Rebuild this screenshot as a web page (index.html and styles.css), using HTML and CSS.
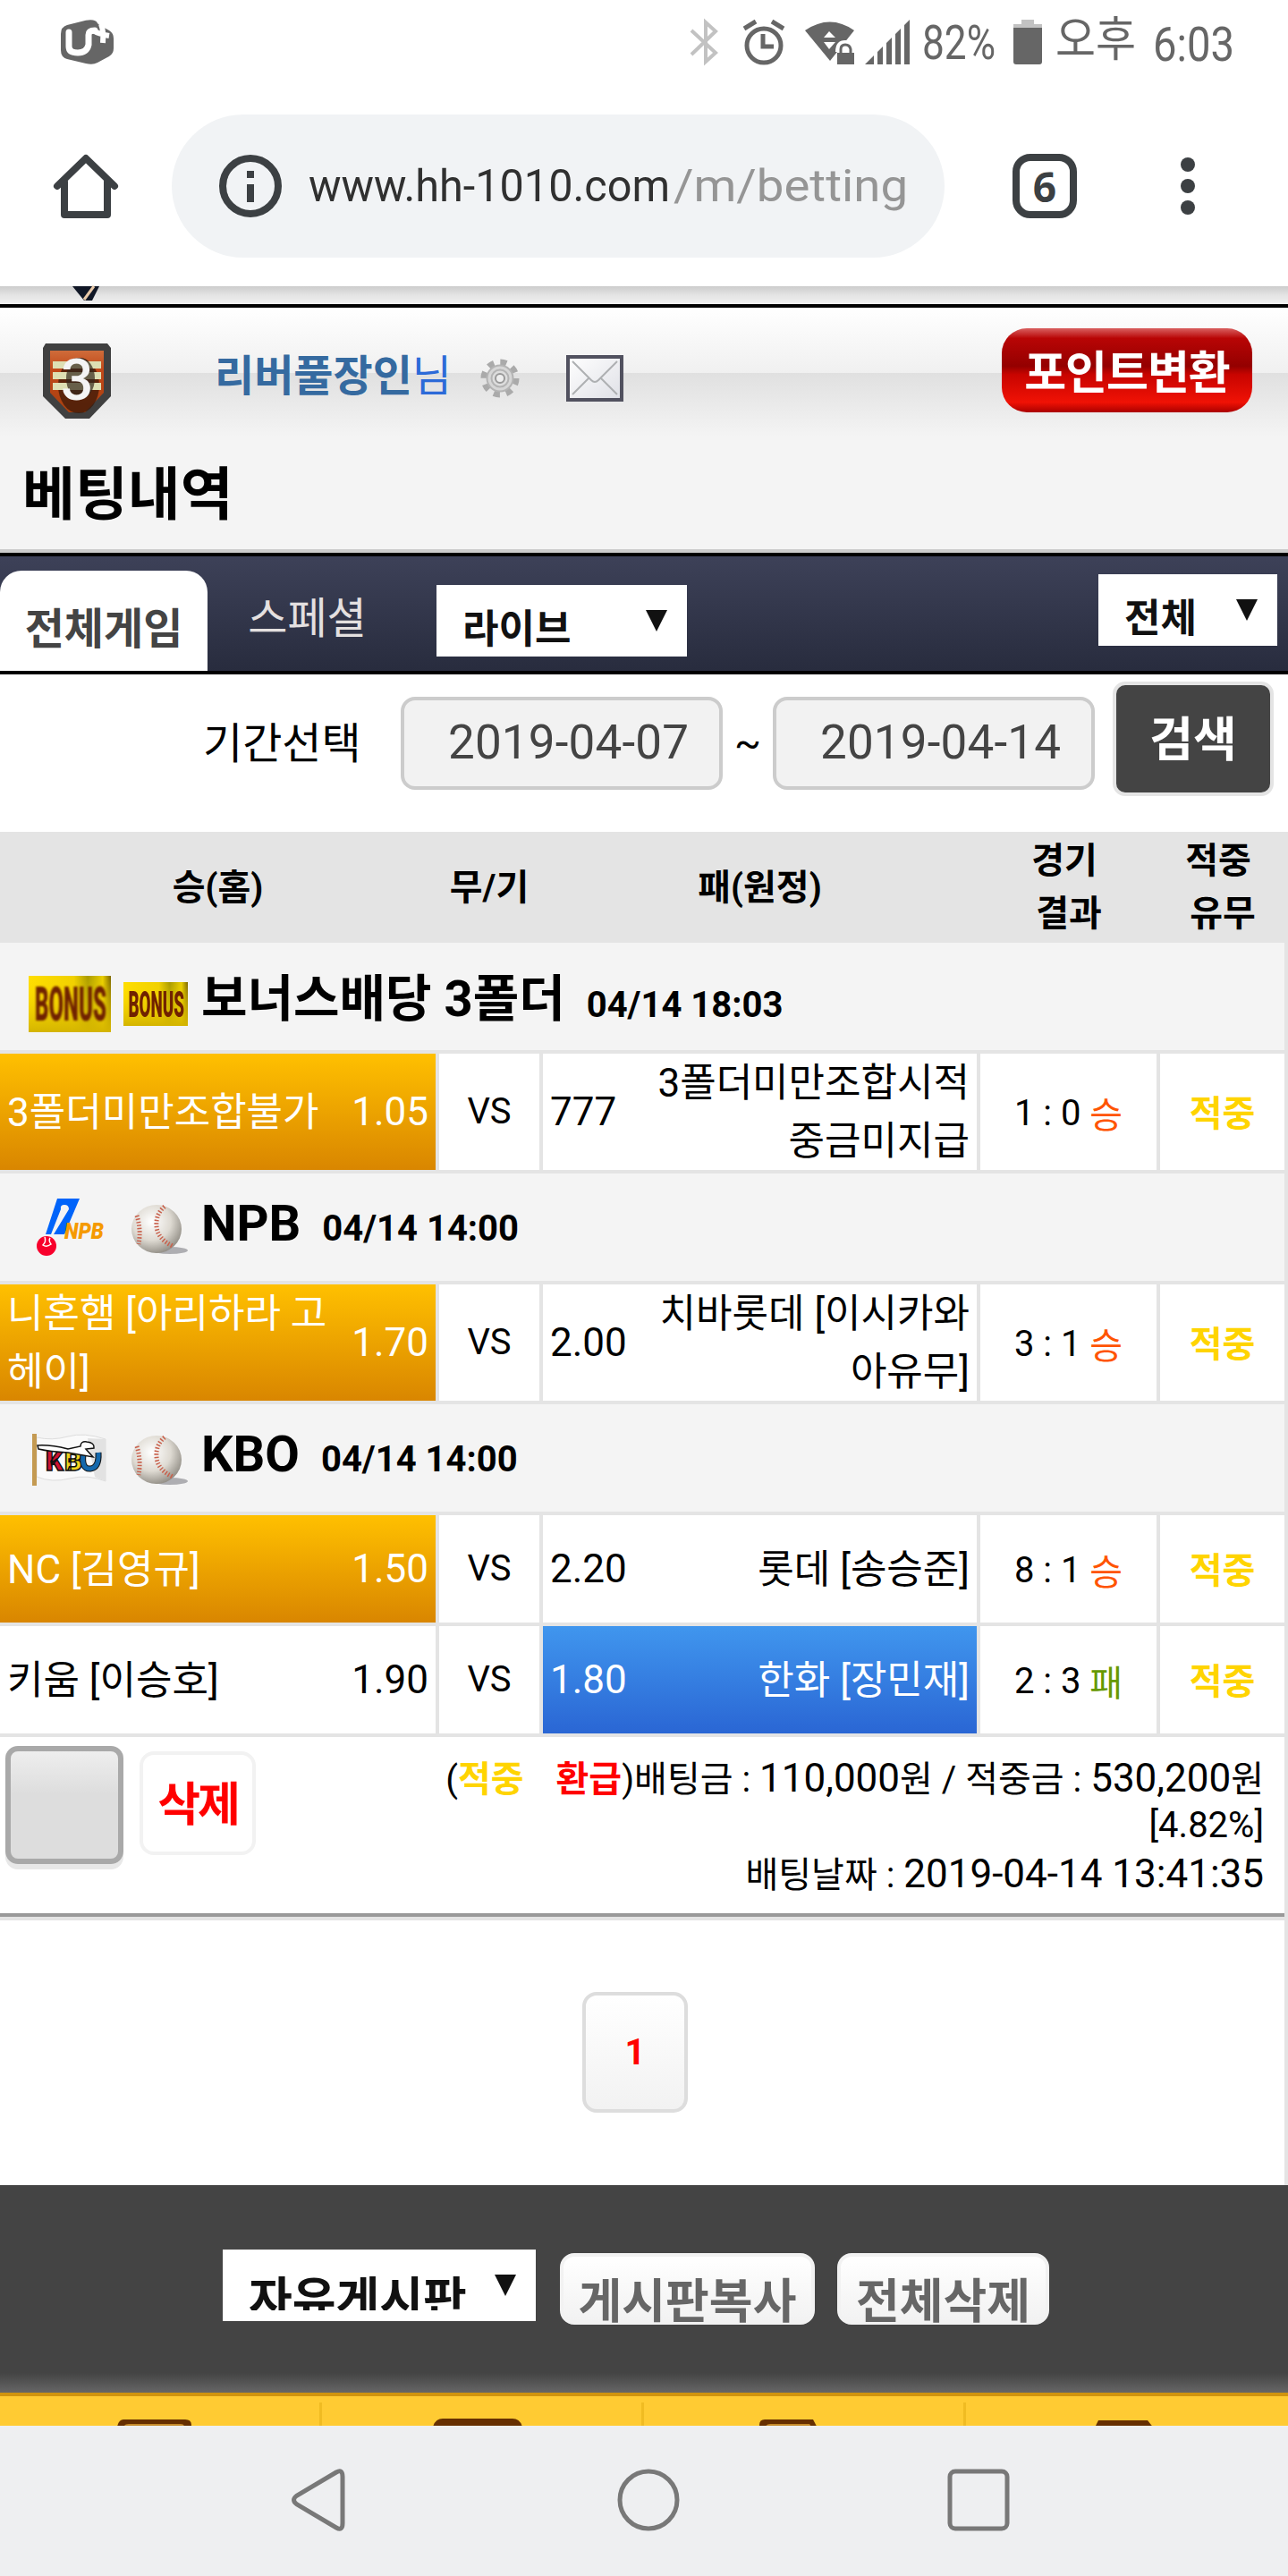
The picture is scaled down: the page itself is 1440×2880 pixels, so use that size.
FILE: index.html
```html
<!DOCTYPE html>
<html lang="ko">
  <head>
    <meta charset="utf-8">
    <title>베팅내역</title>
    <link rel="stylesheet" href="styles.css">
  </head>
  <body>
    <div class="statusbar">
      <svg class="carrier" width="60" height="50" viewBox="0 0 60 50">
        <path fill="#666" d="M8 6L29 .8Q40-1 42 4L44 6 55 12Q60 15 60 21V32Q60 38 55 41L42 48Q37 51 29 49L8 44Q1 42 1 34V16Q1 8 8 6Z"/>
        <path fill="none" stroke="#fff" stroke-width="7" stroke-linecap="round" d="M10 14V30Q10 37 20 37T32 28V17Q32 12 39 12"/>
        <path fill="none" stroke="#fff" stroke-width="6" d="M37 12Q43 16 55 18M46 5Q49 12 48 26"/>
      </svg>
      <svg class="bluetooth" width="31" height="50" viewBox="0 0 31 50"><path fill="none" stroke="#c2c2c2" stroke-width="4" d="M1 12L28 37 17 47V3L28 13 1 39"/></svg>
      <svg class="alarm" width="46" height="50" viewBox="0 0 46 50">
        <ellipse cx="23" cy="29" rx="19" ry="19" fill="none" stroke="#666" stroke-width="5"/>
        <path fill="none" stroke="#666" stroke-width="5" d="M22 16V30H34M1 10L14 2M45 10L32 2"/>
      </svg>
      <svg class="wifi" width="56" height="50" viewBox="0 0 56 50">
        <path fill="#666" d="M0 12Q28-7 55 12L28 46Z"/>
        <path fill="#fff" d="M21 20L27 13 34 20ZM21 25H34L27 33ZM34 36Q34 23 45 23T56 32V36Z"/>
        <path fill="#666" d="M36 37H55V50H36Z"/>
        <path fill="none" stroke="#666" stroke-width="3" d="M40 38V33Q40 28 45 28T51 33V38"/>
      </svg>
      <svg class="signal" width="50" height="50" viewBox="0 0 50 50"><path fill="#666" d="M0 50L10 40V50ZM14 36L20 30V50H14ZM24 26L30 20V50H24ZM34 16L40 10V50H34ZM44 6L50 0V50H44Z"/></svg>
      <svg class="percent" width="84" height="60"><text x="0" y="44" textLength="82" lengthAdjust="spacingAndGlyphs">82%</text></svg>
      <svg class="battery" width="32" height="50" viewBox="0 0 32 50"><path fill="#c2c2c2" d="M9 0H23V5H32V10H0V5H9Z"/><path fill="#666" d="M0 9H32V47Q32 50 29 50H3Q0 50 0 47Z"/></svg>
      <svg class="clock" width="204" height="60"><text x="0" y="41" textLength="90" lengthAdjust="spacingAndGlyphs">오후</text><text x="109" y="46" textLength="91" lengthAdjust="spacingAndGlyphs">6:03</text></svg>
    </div>

    <div class="toolbar">
      <svg class="home" width="72" height="72" viewBox="0 0 72 72"><path fill="none" stroke="#3c4043" stroke-width="8" stroke-linejoin="round" stroke-linecap="round" d="M4 36L36 5 68 36M12 31V68H60V31"/></svg>
      <div class="url">
        <svg width="70" height="70" viewBox="0 0 70 70"><circle cx="35" cy="35" r="31" fill="none" stroke="#3c4043" stroke-width="8"/><path fill="#3c4043" d="M31 18H39V26H31ZM31 33H39V53H31Z"/></svg>
        <svg class="address" width="671" height="80"><text x="0" y="57" textLength="404" lengthAdjust="spacingAndGlyphs" class="host">www.hh-1010.com</text><text x="408" y="57" textLength="262" lengthAdjust="spacingAndGlyphs" class="path">/m/betting</text></svg>
      </div>
      <div class="tabs">6</div>
      <div class="dots"><i></i><i></i><i></i></div>
    </div>

    <div class="strip">
      <svg width="32" height="16" viewBox="0 0 32 16"><path fill="#101726" d="M1 0H31L23 16H14Z"/><path stroke="#e8c9a8" stroke-width="3" d="M25 0L14 15"/></svg>
    </div>

    <div class="member">
      <svg class="level" width="78" height="86" viewBox="0 0 78 86">
        <defs><linearGradient id="shield" x2="0" y2="1"><stop offset="0" stop-color="#cf6c3a"/><stop offset=".3" stop-color="#c2491a"/><stop offset="1" stop-color="#a8400f"/></linearGradient></defs>
        <path fill="#404040" d="M4 1H73L77 6V60L53 85H26L1 60V6Z"/>
        <path fill="url(#shield)" d="M9 9H69V56L48 78H30L9 56Z"/>
        <ellipse cx="41" cy="48" rx="23" ry="31" fill="#3b1808" opacity=".75"/>
        <path fill="#dedfb3" d="M12 21H66V29H12ZM12 33H66V41H12ZM12 45H66V53H12Z"/>
        <ellipse cx="43" cy="40" rx="16" ry="23" fill="#34281c" opacity=".7"/>
        <text x="21" y="64" font-size="64" font-weight="500" fill="#f4f4f4">3</text>
      </svg>
      <div class="name"><b>리버풀장인</b>님</div>
      <svg class="gear" width="44" height="44" viewBox="0 0 44 44">
        <circle cx="22" cy="22" r="18" fill="none" stroke="#aaa" stroke-width="7" stroke-dasharray="7 7.1"/>
        <circle cx="22" cy="22" r="12" fill="#ddd" stroke="#b4b4b4" stroke-width="7"/>
        <circle cx="22" cy="22" r="12" fill="none" stroke="#d6d6d6" stroke-width="3"/>
        <circle cx="22" cy="22" r="5" fill="#eee" stroke="#999" stroke-width="2"/>
      </svg>
      <svg class="mail" width="64" height="52" viewBox="0 0 64 52">
        <defs><linearGradient id="paper" x2="1" y2="1"><stop offset="0" stop-color="#fff"/><stop offset="1" stop-color="#dfe0e6"/></linearGradient></defs>
        <path fill="url(#paper)" stroke="#51515f" stroke-width="4" d="M2 2H62V50H2Z"/>
        <path fill="none" stroke="#aeb0b2" stroke-width="2" d="M7 7L28 28Q32 32 36 28L57 7M7 44L25 26M57 44L39 26"/>
      </svg>
      <div class="point">포인트변환</div>
    </div>
    <h1>베팅내역</h1>

    <div class="nav">
      <a class="on">전체게임</a>
      <a>스페셜</a>
      <div class="select live">라이브<i></i></div>
      <div class="select all">전체<i></i></div>
    </div>

    <div class="search">
      <span class="label">기간선택</span>
      <div class="date">2019-04-07</div>
      <span class="tilde">~</span>
      <div class="date">2019-04-14</div>
      <div class="submit">검색</div>
    </div>

    <div class="thead">
      <div>승(홈)</div>
      <div>무/기</div>
      <div>패(원정)</div>
      <div class="two">경기<br>&nbsp;결과</div>
      <div class="two">적중<br>&nbsp;유무</div>
    </div>

    <div class="board">
      <div class="league bonus">
        <svg width="92" height="63" viewBox="0 0 92 63" class="b1"><use href="#bonus"/></svg>
        <svg width="72" height="49" viewBox="0 0 92 63" preserveAspectRatio="none" class="b2"><use href="#bonus"/></svg>
        <strong>보너스배당 3폴더</strong><b>04/14 18:03</b>
      </div>
      <div class="match tall">
        <div class="team win"><span>3폴더미만조합불가</span><em>1.05</em></div>
        <div class="vs">VS</div>
        <div class="team away"><em>777</em><span>3폴더미만조합시적<br>중금미지급</span></div>
        <div class="score">1 : 0 <span class="w">승</span></div>
        <div class="hit">적중</div>
      </div>

      <div class="league">
        <svg class="npb" width="80" height="64" viewBox="0 0 80 64">
          <path fill="#0064fa" d="M23 0H48L31 40H19L36 12Q36 7 31 7T27 12L16 40H10Z"/>
          <ellipse cx="11" cy="53" rx="11" ry="11" fill="#f8002c"/>
          <path fill="none" stroke="#fff" stroke-width="1.500" d="M9 43Q11 48 7 52Q11 55 16 51Q13 47 15 44"/>
          <text x="31" y="45" textLength="44" lengthAdjust="spacingAndGlyphs" font-size="25" font-weight="900" font-style="italic" fill="#f59a00">NPB</text>
        </svg>
        <svg width="64" height="56" viewBox="0 0 64 56" class="ball"><use href="#ball"/></svg>
        <strong>NPB</strong><b>04/14 14:00</b>
      </div>
      <div class="match tall">
        <div class="team win"><span>니혼햄 [아리하라 고<br>헤이]</span><em>1.70</em></div>
        <div class="vs">VS</div>
        <div class="team away"><em>2.00</em><span>치바롯데 [이시카와<br>아유무]</span></div>
        <div class="score">3 : 1 <span class="w">승</span></div>
        <div class="hit">적중</div>
      </div>

      <div class="league">
        <svg class="kbo" width="84" height="58" viewBox="0 0 84 58">
          <path fill="#fafafa" stroke="#ddd" d="M5 4Q22 8 40 3T82 6V53Q62 45 42 50T5 48Z"/>
          <path fill="#e2e2e2" d="M62 5L82 6V53L70 48Z"/>
          <path fill="#c49a52" d="M0 0H5V58H0Z"/>
          <g font-size="31" font-weight="900" stroke="#111" stroke-width="1.500">
            <text x="15" y="41" fill="#d01232">K</text>
            <text x="36" y="41" fill="#f2d21c">B</text>
          </g>
          <path fill="none" stroke="#111" stroke-width="7" d="M57 23Q55 40 65 39T74 21"/>
          <path fill="none" stroke="#1468ac" stroke-width="5" d="M57 23Q55 40 65 39T74 21"/>
          <path fill="#fff" stroke="#111" stroke-width="1.500" d="M6 13Q20 12 40 17L54 14Q54 8 61 9Q70 10 69 16L60 17 68 26 40 21Q20 20 7 17Z"/>
        </svg>
        <svg width="64" height="56" viewBox="0 0 64 56" class="ball"><use href="#ball"/></svg>
        <strong>KBO</strong><b>04/14 14:00</b>
      </div>
      <div class="match">
        <div class="team win"><span>NC [김영규]</span><em>1.50</em></div>
        <div class="vs">VS</div>
        <div class="team away"><em>2.20</em><span>롯데 [송승준]</span></div>
        <div class="score">8 : 1 <span class="w">승</span></div>
        <div class="hit">적중</div>
      </div>
      <div class="match">
        <div class="team"><span>키움 [이승호]</span><em>1.90</em></div>
        <div class="vs">VS</div>
        <div class="team away lose"><em>1.80</em><span>한화 [장민재]</span></div>
        <div class="score">2 : 3 <span class="l">패</span></div>
        <div class="hit">적중</div>
      </div>

      <div class="summary">
        <div class="check"></div>
        <div class="delete">삭제</div>
        <div class="money">
          <div class="sum"><small>(<b class="y">적중</b><b class="r">환급</b>)배팅금 : </small>110,000<small>원 / 적중금 : </small>530,200<small>원</small></div>
          <div class="rate">[4.82%]</div>
          <div class="when"><small>배팅날짜 : </small>2019-04-14 13:41:35</div>
        </div>
      </div>
    </div>

    <div class="pager"><a>1</a></div>

    <div class="actions">
      <div class="select post"><span>자유게시판</span><i></i></div>
      <div class="btn copy">게시판복사</div>
      <div class="btn">전체삭제</div>
    </div>

    <div class="quick">
      <div><svg width="84" height="16" viewBox="0 0 84 16"><path fill="#662f00" d="M0 16Q1 1 8 1H77Q84 1 84 7V16Z"/><path fill="#c4892a" d="M9 8Q10 6 14 6H72Q76 6 76 9H9Z"/></svg></div>
      <div><svg width="102" height="16" viewBox="0 0 102 16"><path fill="#662f00" d="M0 16Q1 0 12 0H90Q101 0 102 16Z"/></svg></div>
      <div><svg width="68" height="16" viewBox="0 0 68 16"><path fill="#662f00" d="M0 16V7Q0 1 6 1H60L68 16Z"/><path fill="#c4892a" d="M7 9Q8 6 12 6H56L58 9H7Z"/></svg></div>
      <div><svg width="68" height="16" viewBox="0 0 68 16"><path fill="#662f00" d="M0 12L5 2H60L68 12Z"/></svg></div>
    </div>

    <div class="softkeys">
      <svg class="back" width="62" height="70" viewBox="0 0 62 70"><path d="M51 4Q58 0 58 9V61Q58 70 51 66L7 40Q0 35 7 30Z"/></svg>
      <svg class="circle" width="70" height="70" viewBox="0 0 70 70"><circle cx="35" cy="35" r="32"/></svg>
      <svg class="square" width="70" height="70" viewBox="0 0 70 70"><rect x="3" y="3" width="64" height="64" rx="6"/></svg>
    </div>

    <!-- shared icons -->
    <svg class="defs">
      <defs>
        <linearGradient id="gold"><stop offset="0" stop-color="#ffde00"/><stop offset=".55" stop-color="#f0d000"/><stop offset=".72" stop-color="#a99a00"/><stop offset=".9" stop-color="#e9ce00"/><stop offset="1" stop-color="#7a6500"/></linearGradient>
        <linearGradient id="fade" x2="0" y2="1"><stop offset="0" stop-color="#ffde00" stop-opacity="0"/><stop offset="1" stop-color="#d4b400"/></linearGradient>
        <radialGradient id="leather" cx=".4" cy=".35" r=".7"><stop offset="0" stop-color="#fff"/><stop offset=".55" stop-color="#dedad2"/><stop offset="1" stop-color="#8c8880"/></radialGradient>
        <filter id="soft"><feGaussianBlur stdDeviation="1"/></filter>
      </defs>
      <symbol id="bonus" viewBox="0 0 92 63" preserveAspectRatio="none">
        <rect width="92" height="63" fill="url(#gold)"/>
        <rect width="92" height="63" fill="url(#fade)"/>
        <text x="7" y="50" textLength="80" lengthAdjust="spacingAndGlyphs" font-size="53" font-weight="900" fill="#702000" filter="url(#soft)">BONUS</text>
      </symbol>
      <symbol id="ball" viewBox="0 0 64 56">
        <ellipse cx="44" cy="51" rx="20" ry="4" fill="#aeaeb2"/>
        <ellipse cx="29" cy="27" rx="28" ry="27" fill="url(#leather)"/>
        <path fill="none" stroke="#c8604c" stroke-width="5" stroke-dasharray="1.500 2" d="M38 2Q28 10 29 24T47 46M7 12Q12 28 9 44"/>
      </symbol>
    </svg>
  </body>
</html>
```

FILE: styles.css
```css
* { box-sizing: border-box; }
body { margin: 0; width: 1440px; height: 2880px; overflow: hidden; background: #fff; color: #000; font: 44px Roboto, "Noto Sans CJK KR", sans-serif; }
svg { display: block; flex: none; overflow: visible; }
svg text { font-family: Roboto, "Noto Sans CJK KR", sans-serif; }
i, em { font-style: normal; }
.defs { position: absolute; width: 0; height: 0; }

/* phone status bar */
.statusbar { display: flex; height: 94px; padding: 22px 0 0 67px; }
.statusbar text { fill: #666; font-size: 53px; }
.bluetooth { margin-left: 645px; }
.alarm { margin-left: 28px; }
.wifi { margin-left: 23px; }
.signal { margin-left: 11px; }
.percent { margin-left: 14px; }
.battery { margin-left: 18px; }
.clock { margin-left: 15px; }

/* browser bar */
.toolbar { display: flex; align-items: center; height: 226px; padding: 2px 0 0 60px; }
.url { display: flex; align-items: center; width: 864px; height: 160px; margin-left: 60px; padding-left: 53px; border-radius: 80px; background: #f1f3f5; }
.address { margin-left: 30px; }
.address text { font-size: 50px; }
.host { fill: #303030; }
.path { fill: #959595; }
.tabs { width: 72px; height: 72px; margin-left: 76px; border: 8px solid #3c4043; border-radius: 20px; color: #3c4043; font: bold 46px/57px "Open Sans", sans-serif; text-align: center; }
.dots { display: grid; gap: 8px; margin-left: 116px; }
.dots i { width: 16px; height: 16px; border-radius: 8px; background: #3c4043; }

/* member bar */
.strip { height: 24px; padding-left: 80px; border-bottom: 4px solid #000; background: linear-gradient(#ccc, #e4e4e4 50%, #f0f0f0); }
.member { display: flex; height: 144px; padding-left: 47px; background: linear-gradient(#fff, #f0f0f0 73px, #e0e0e0 73px, #f4f4f4); }
.level { margin-top: 39px; }
.name { width: 264px; margin: 39px 0 0 115px; color: #2c6ad8; font-size: 48px; line-height: 76px; white-space: nowrap; }
.name b { color: #356aa0; }
.gear { margin: 57px 0 0 33px; }
.mail { margin: 53px 0 0 52px; }
.point { width: 280px; height: 94px; margin: 23px 0 0 423px; border-radius: 28px; background: linear-gradient(#d96060, #b80505 12%, #940000 45%, #c80400 55%, #f01205 88%, #a00); color: #fff; font: bold 51px/92px "Noto Sans CJK KR", sans-serif; letter-spacing: -1px; text-align: center; }
h1 { height: 130px; margin: 0; padding-left: 25px; border-bottom: 4px solid #ccc; background: #f4f4f4; font-size: 64px; line-height: 132px; }

/* game tabs */
.nav { display: flex; height: 136px; border: solid #000; border-width: 4px 0; background: linear-gradient(#3d4158, #282c3e); }
.nav a { width: 232px; margin-top: 16px; color: #e4e0e0; font-size: 48px; line-height: 106px; text-align: center; }
.nav a + a { width: 222px; padding-left: 1px; line-height: 112px; margin-top: 14px; }
.nav a.on { border-radius: 24px 24px 0 0; background: #fff; color: #444; font-weight: bold; line-height: 131px; }
.select { display: flex; justify-content: space-between; height: 80px; padding: 0 22px 0 29px; background: #fff; color: #111; font-weight: bold; line-height: 100px; }
.select i { width: 24px; height: 24px; margin-top: 28px; background: #111; clip-path: polygon(0 0, 100% 0, 50% 100%); }
.live { width: 280px; margin: 32px 0 0 34px; }
.all { width: 200px; margin: 20px 0 0 460px; }

.search { display: flex; height: 176px; padding: 25px 0 0 227px; }
.label { width: 221px; font-size: 48px; line-height: 106px; }
.date { width: 360px; height: 104px; padding-left: 49px; border: 4px solid #ccc; border-radius: 16px; background: #f2f2f2; color: #444; font-size: 53px; line-height: 94px; }
.date { letter-spacing: .15px; }
.tilde { width: 56px; line-height: 104px; text-align: center; }
.submit { width: 180px; height: 128px; margin: -17px 0 0 20px; border: 4px solid #e4e4e4; border-radius: 14px; background: #444; color: #fff; font-size: 53px; font-weight: bold; line-height: 125px; text-align: center; }

/* bet table */
.thead, .match { display: grid; grid-template-columns: 487px 112px 485px 197px 139px; gap: 4px; }
.thead { height: 124px; align-items: center; background: #e4e4e4; font-size: 40px; font-weight: bold; line-height: 59px; text-align: center; }
.two { padding-right: 9px; }
.board { display: grid; gap: 4px; padding: 0 4px 4px 0; background: #e4e4e4; }
.league { display: flex; height: 120px; padding-left: 36px; background: #f4f4f4; line-height: 112px; white-space: pre; }
.league strong { margin-left: 15px; font-size: 56px; }
.league b { margin-left: 24px; font-size: 40px; line-height: 123px; }
.bonus { padding-left: 32px; line-height: 127px; }
.bonus b { line-height: 139px; }
.b1 { margin-top: 37px; }
.b2 { margin: 44px 0 0 14px; }
.npb { margin: 28px 0 0 5px; }
.ball { margin: 35px 0 0 25px; }
.kbo { margin-top: 33px; }
.kbo + .ball { margin-left: 26px; }
.match { height: 120px; grid-template-rows: 120px; }
.match.tall { height: 130px; grid-template-rows: 130px; }
.match > div { display: flex; align-items: center; background: #fff; }
.team { justify-content: space-between; padding: 0 8px; white-space: nowrap; }
.team span { padding-top: 2px; line-height: 65px; }
.away span { text-align: right; }
.match .win { background: linear-gradient(#ffc000, #d98600); color: #fff; }
.match .lose { background: linear-gradient(#4096ee, #2a66d4); color: #fff; }
.vs, .score, .hit { justify-content: center; font-size: 40px; }
.vs, .hit { padding-bottom: 2px; }
.score { padding-top: 2px; white-space: pre; }
.w { color: #ff5400; }
.l { color: #669900; }
.hit, .y { color: #ffd400; font-weight: bold; }
.r { color: #f00; }

.summary { display: flex; height: 201px; border-bottom: 4px solid #999; background: #fff; }
.check { width: 132px; height: 132px; margin: 10px 0 0 6px; border: 6px solid #a9a9a9; border-radius: 14px; background: linear-gradient(#eee, #ddd 40%); box-shadow: 0 6px #e8e8e8; }
.delete { width: 130px; height: 116px; margin: 16px 0 0 18px; border: 4px solid #f2f2f2; border-radius: 16px; color: #f00; font-size: 52px; font-weight: bold; letter-spacing: -3px; line-height: 114px; text-align: center; }
.money { flex: 1; padding: 20px 23px 0 0; text-align: right; white-space: nowrap; }
.money small { font-size: 40px; }
.sum { line-height: 52px; }
.rate { font-size: 40px; line-height: 49px; }
.when { line-height: 60px; }
.r { margin-left: 36px; }

.pager { height: 296px; padding: 80px 0 0 651px; border-right: 4px solid #e4e4e4; }
.pager a { display: block; width: 118px; height: 135px; border: 4px solid #ddd; border-radius: 16px; background: linear-gradient(#fff, #f2f2f2); color: #f00; font-size: 40px; font-weight: bold; line-height: 127px; text-align: center; }

.actions { display: flex; height: 232px; padding: 72px 0 0 249px; background: linear-gradient(#444 210px, #666); }
.post { width: 350px; font-size: 53px; line-height: 114px; }
.post span { height: 68px; overflow: hidden; }
.btn { width: 237px; height: 80px; margin: 4px 0 0 25px; border: 4px solid #f2f2f2; border-radius: 16px; background: linear-gradient(#fff, #f2f2f2); color: #666; font-size: 53px; font-weight: bold; line-height: 102px; text-align: center; }
.copy { width: 285px; margin-left: 27px; }

/* bottom menu, cut off by the soft keys */
.quick { display: grid; grid-template-columns: repeat(4, 360px); height: 37px; overflow: hidden; border-top: 4px solid #d0940e; background: #ffcb33; }
.quick div { display: flex; justify-content: center; padding-top: 25px; border-right: 3px solid; border-image: linear-gradient(transparent 8px, #f0bb22 8px) 1; }
.quick div:first-child { padding-right: 14px; }
.quick div:nth-child(2) { padding-right: 10px; }
.quick div:nth-child(3) { padding-right: 31px; }
.quick div:last-child { border: 0; padding-right: 6px; }
.softkeys { display: flex; height: 168px; padding: 48px 0 0 325px; background: #eeeff1; }
.softkeys path, .softkeys circle, .softkeys rect { fill: none; stroke: #787878; stroke-width: 5; }
.circle { margin-left: 303px; }
.square { margin-left: 299px; }
```
